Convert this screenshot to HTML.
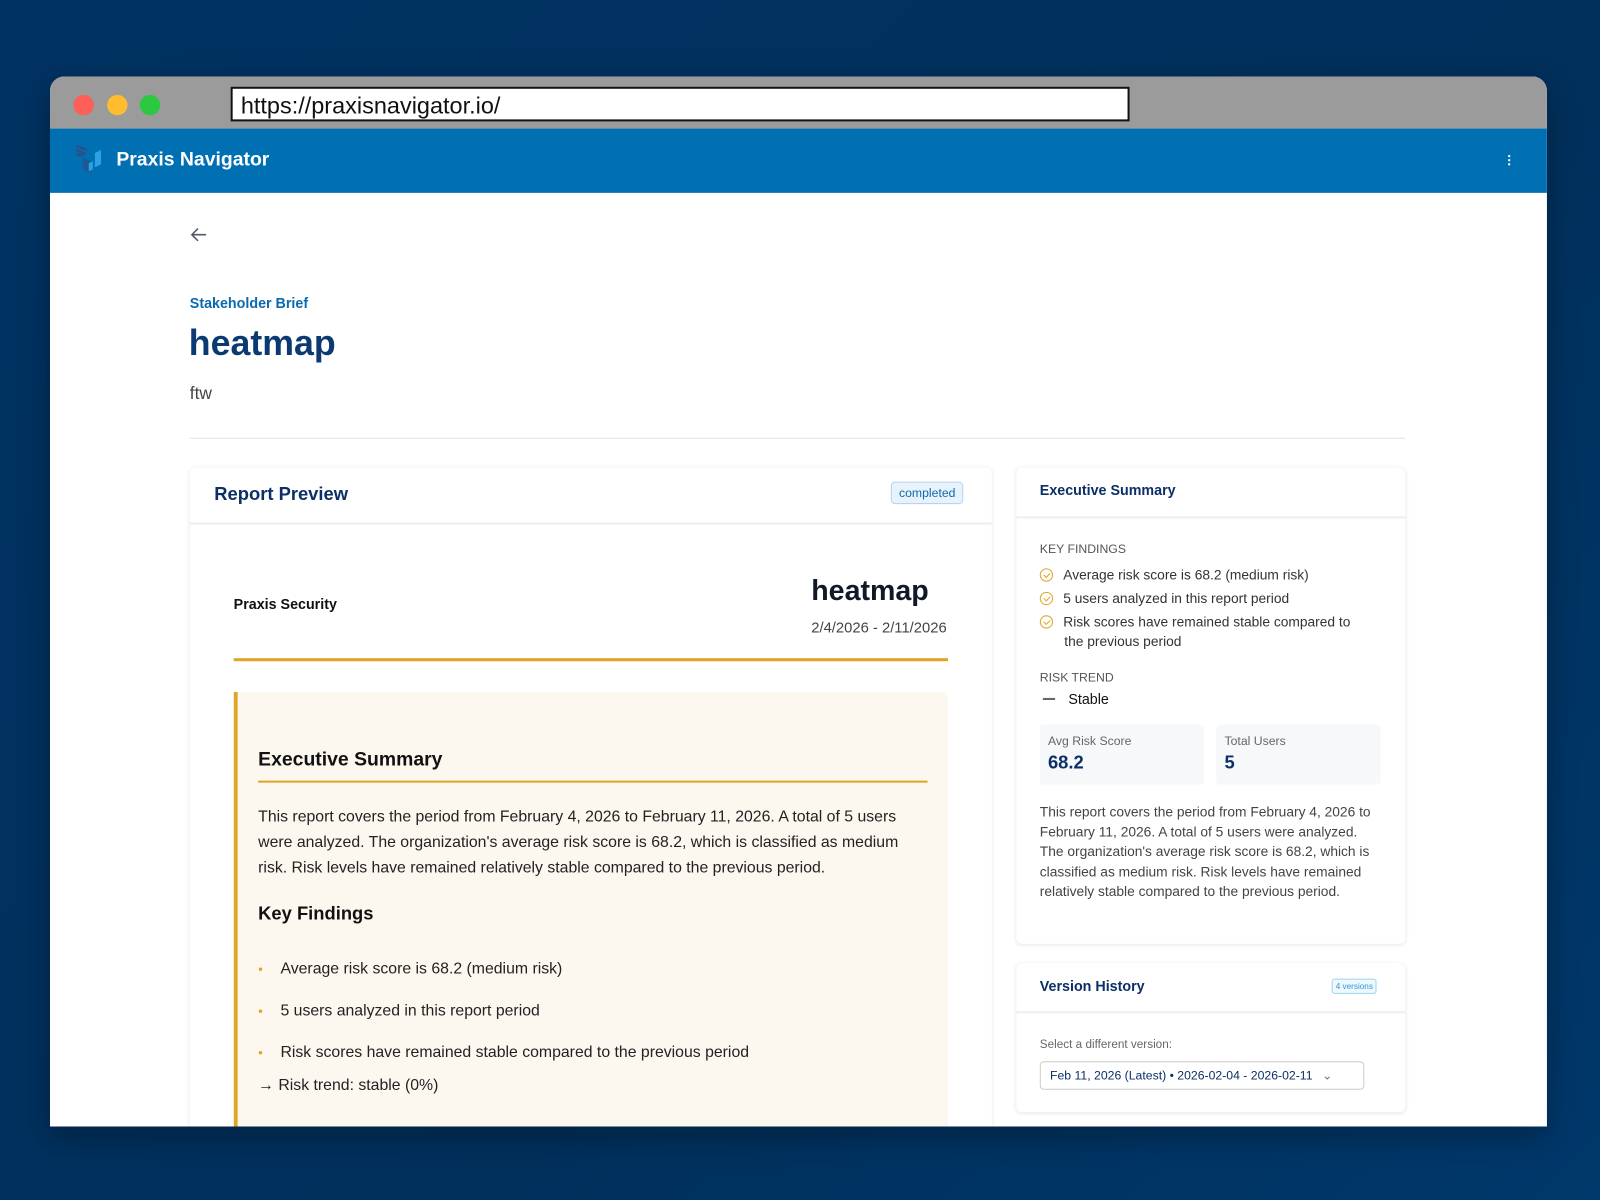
<!DOCTYPE html>
<html><head><meta charset="utf-8"><style>
*{margin:0;padding:0;box-sizing:border-box}
html,body{width:1600px;height:1200px;overflow:hidden;background:#00325f}
body{font-family:"Liberation Sans",sans-serif}
#w{position:absolute;left:0;top:0;width:1568px;height:1176px;transform:scale(1.020408);transform-origin:0 0;background:linear-gradient(135deg,#003262,#00305c 60%,#00386b)}
.a{position:absolute}
.frame{left:49px;top:75px;width:1467px;height:1029px;background:#fff;border-radius:14px 14px 0 0;overflow:hidden;box-shadow:0 10px 30px rgba(0,0,0,.3)}
.tb{left:0;top:0;width:1467px;height:51px;background:#9b9b9b}
.dot{width:20px;height:20px;border-radius:50%;top:18px}
.url{left:177px;top:10px;width:881px;height:34px;background:#fff;border:2px solid #111;font-size:23px;color:#111;padding:2px 8px;line-height:28px}
.nav{left:0;top:51px;width:1467px;height:63px;background:#0070b3}
.card{background:#fff;border-radius:6px;box-shadow:0 1px 4px rgba(0,0,0,.1)}
.t{position:absolute;white-space:nowrap}
.ck{display:inline-block;width:13px;height:13px;border:1.3px solid #e0a526;border-radius:50%;margin-right:10px;vertical-align:-2px;position:relative}
.ck:after{content:"";position:absolute;left:3.5px;top:2px;width:3px;height:5px;border:solid #e0a526;border-width:0 1.2px 1.2px 0;transform:rotate(45deg)}
</style></head><body><div id="w">
<div class="a frame">
 <div class="a tb"></div>
 <div class="a dot" style="left:23px;background:#fe5f57"></div>
 <div class="a dot" style="left:56px;background:#febc2e"></div>
 <div class="a dot" style="left:88px;background:#2bc840"></div>
 <div class="a url">https://praxisnavigator.io/</div>
 <div class="a nav">
  <svg class="a" style="left:22px;top:14px" width="32" height="32" viewBox="0 0 32 32"><path d="M4 3l10 4M3 7l10 4M4 11l6 2" stroke="#2a4f8a" stroke-width="2.5"/><path d="M10 14v12l8 4V18z" fill="#1c5a96"/><path d="M16 20l4-2v8l-4 2zM22 10l6-3v14l-6 3z" fill="#2aa3e0"/></svg>
  <div class="t" style="left:65px;top:20px;font-size:19px;font-weight:bold;color:#fff">Praxis Navigator</div>
  <div class="a" style="left:1429px;top:26px;width:2px;height:2px;background:#fff;box-shadow:0 4px #fff,0 8px #fff"></div>
 </div>
 <svg class="a" style="left:136px;top:145px" width="20" height="20" viewBox="0 0 20 20"><path d="M17 10H3M9 4l-6 6 6 6" fill="none" stroke="#555b66" stroke-width="1.5"/></svg>
 <div class="t" style="left:137px;top:214px;font-size:14px;font-weight:bold;color:#0a6ab0">Stakeholder Brief</div>
 <div class="t" style="left:136px;top:242px;font-size:35px;font-weight:bold;color:#0b3a73">heatmap</div>
 <div class="t" style="left:137px;top:301px;font-size:17px;color:#444">ftw</div>
 <div class="a" style="left:137px;top:354px;width:1191px;height:1px;background:#e2e4e8"></div>

 <div class="a card" style="left:137px;top:383px;width:786px;height:700px">
  <div class="t" style="left:24px;top:16px;font-size:18px;font-weight:bold;color:#0b2f66">Report Preview</div>
  <div class="t" style="left:687px;top:14px;font-size:12px;color:#0a6ab0;background:#e8f2fb;border:1px solid #b6d3ef;border-radius:4px;padding:3px 7px">completed</div>
  <div class="a" style="left:0;top:54px;width:786px;height:2px;background:#eceef1"></div>
  <div class="t" style="left:43px;top:126px;font-size:14px;font-weight:bold;color:#111">Praxis Security</div>
  <div class="t" style="left:609px;top:105px;font-size:28px;font-weight:bold;color:#111827">heatmap</div>
  <div class="t" style="left:609px;top:150px;font-size:14.5px;color:#444">2/4/2026 - 2/11/2026</div>
  <div class="a" style="left:43px;top:187px;width:700px;height:3px;background:#e0a526"></div>
  <div class="a" style="left:43px;top:220px;width:700px;height:480px;background:#fcf8f0;border-left:4px solid #e0a526;border-radius:0 6px 0 0">
   <div class="t" style="left:20px;top:56px;font-size:19px;font-weight:bold;color:#111">Executive Summary</div>
   <div class="a" style="left:20px;top:87px;width:656px;height:2px;background:#e0a526"></div>
   <div class="a" style="left:20px;top:110px;width:648px;font-size:15.5px;line-height:25px;color:#222">This report covers the period from February 4, 2026 to February 11, 2026. A total of 5 users were analyzed. The organization's average risk score is 68.2, which is classified as medium risk. Risk levels have remained relatively stable compared to the previous period.</div>
   <div class="t" style="left:20px;top:207px;font-size:18px;font-weight:bold;color:#111">Key Findings</div>
   <div class="t" style="left:20px;top:263px;font-size:15.5px;color:#222"><span style="color:#e0a526;font-size:8px;margin-right:17px;vertical-align:2px">●</span>Average risk score is 68.2 (medium risk)</div>
   <div class="t" style="left:20px;top:304px;font-size:15.5px;color:#222"><span style="color:#e0a526;font-size:8px;margin-right:17px;vertical-align:2px">●</span>5 users analyzed in this report period</div>
   <div class="t" style="left:20px;top:345px;font-size:15.5px;color:#222"><span style="color:#e0a526;font-size:8px;margin-right:17px;vertical-align:2px">●</span>Risk scores have remained stable compared to the previous period</div>
   <div class="t" style="left:20px;top:377px;font-size:15.5px;color:#222">→ Risk trend: stable (0%)</div>
  </div>
 </div>

 <div class="a card" style="left:947px;top:383px;width:381px;height:467px">
  <div class="t" style="left:23px;top:14px;font-size:14px;font-weight:bold;color:#0b2f66">Executive Summary</div>
  <div class="a" style="left:0;top:48px;width:381px;height:2px;background:#eceef1"></div>
  <div class="t" style="left:23px;top:73px;font-size:12px;color:#555">KEY FINDINGS</div>
  <div class="t" style="left:23px;top:94px;font-size:13.5px;color:#333;line-height:23px"><span class="ck"></span>Average risk score is 68.2 (medium risk)<br><span class="ck"></span>5 users analyzed in this report period<br><span class="ck"></span>Risk scores have remained stable compared to</div>
  <div class="t" style="left:47px;top:163px;font-size:13.5px;color:#333">the previous period</div>
  <div class="t" style="left:23px;top:199px;font-size:12px;color:#555">RISK TREND</div>
  <div class="a" style="left:26px;top:226px;width:12px;height:1.5px;background:#666"></div>
  <div class="t" style="left:51px;top:219px;font-size:14px;color:#111">Stable</div>
  <div class="a" style="left:23px;top:252px;width:161px;height:59px;background:#f6f8fa;border-radius:4px">
   <div class="t" style="left:8px;top:9px;font-size:12px;color:#666">Avg Risk Score</div>
   <div class="t" style="left:8px;top:27px;font-size:18px;font-weight:bold;color:#0b2f66">68.2</div></div>
  <div class="a" style="left:196px;top:252px;width:161px;height:59px;background:#f6f8fa;border-radius:4px">
   <div class="t" style="left:8px;top:9px;font-size:12px;color:#666">Total Users</div>
   <div class="t" style="left:8px;top:27px;font-size:18px;font-weight:bold;color:#0b2f66">5</div></div>
  <div class="a" style="left:23px;top:328px;width:334px;font-size:13.5px;line-height:19.6px;color:#444">This report covers the period from February 4, 2026 to February 11, 2026. A total of 5 users were analyzed. The organization's average risk score is 68.2, which is classified as medium risk. Risk levels have remained relatively stable compared to the previous period.</div>
 </div>

 <div class="a card" style="left:947px;top:869px;width:381px;height:146px">
  <div class="t" style="left:23px;top:14px;font-size:14px;font-weight:bold;color:#0b2f66">Version History</div>
  <div class="t" style="left:309px;top:15px;font-size:8px;color:#2a9ad8;border:1px solid #9fd3f0;background:#eef8fd;border-radius:3px;padding:2px 3px">4 versions</div>
  <div class="a" style="left:0;top:47px;width:381px;height:2px;background:#eceef1"></div>
  <div class="t" style="left:23px;top:74px;font-size:11.5px;color:#666">Select a different version:</div>
  <div class="a" style="left:23px;top:96px;width:318px;height:28px;border:1px solid #ccc;border-radius:4px;font-size:12px;color:#0b2f66;padding:6px 9px;white-space:nowrap">Feb 11, 2026 (Latest) • 2026-02-04 - 2026-02-11 <span style="color:#777;margin-left:6px">⌄</span></div>
 </div>
</div>
</div></body></html>
